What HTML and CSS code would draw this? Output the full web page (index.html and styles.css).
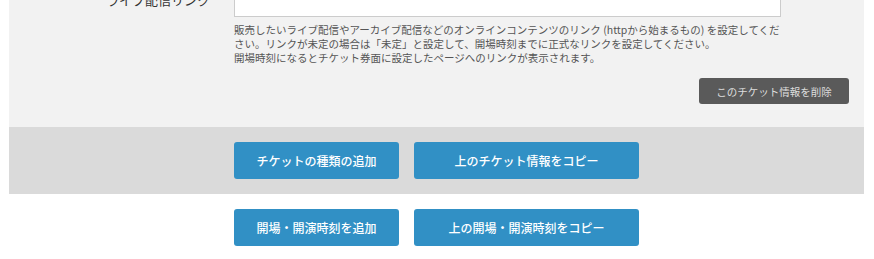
FILE: index.html
```html
<!DOCTYPE html>
<html lang="ja">
<head>
<meta charset="utf-8">
<title>チケット設定</title>
<link rel="stylesheet" href="styles.css">
</head>
<body>
<div class="page">
  <section class="panel">
    <div class="form-row">
      <label class="label" for="live-link">ライブ配信リンク</label>
      <div class="field">
        <input class="input" id="live-link" type="text">
        <p class="help">販売したいライブ配信やアーカイブ配信などのオンラインコンテンツのリンク (httpから始まるもの) を設定してください。リンクが未定の場合は「未定」と設定して、開場時刻までに正式なリンクを設定してください。<br>開場時刻になるとチケット券面に設定したページへのリンクが表示されます。</p>
      </div>
    </div>
    <div class="panel-actions">
      <button class="btn-delete" type="button">このチケット情報を削除</button>
    </div>
  </section>
  <div class="band band-gray">
    <button class="btn btn-narrow" type="button">チケットの種類の追加</button>
    <button class="btn btn-wide" type="button">上のチケット情報をコピー</button>
  </div>
  <div class="band">
    <button class="btn btn-narrow" type="button">開場・開演時刻を追加</button>
    <button class="btn btn-wide" type="button">上の開場・開演時刻をコピー</button>
  </div>
</div>
</body>
</html>
```

FILE: styles.css
```css
* {
  box-sizing: border-box;
}

html, body {
  margin: 0;
  padding: 0;
  background: #ffffff;
}

body {
  font-family: "Noto Sans CJK JP", "Noto Sans", sans-serif;
  color: #333333;
}

.page {
  width: 855px;
  margin: -16px 0 0 9px;
}

.panel {
  background: #f2f2f2;
  padding: 0 15px 23px 0;
}

.form-row {
  display: grid;
  grid-template-columns: 201px 547px;
  column-gap: 24px;
  align-items: start;
}

.label {
  height: 33px;
  line-height: 33px;
  text-align: right;
  font-size: 13px;
  color: #333333;
  margin-top: -1px;
}

.field {
  display: flex;
  flex-direction: column;
}

.input {
  display: block;
  width: 547px;
  height: 33px;
  border: 1px solid #cccccc;
  background: #ffffff;
  margin: 0;
  padding: 0 8px;
}

.help {
  margin: 6px 0 0;
  font-size: 10.5px;
  line-height: 14px;
  color: #555555;
}

.panel-actions {
  display: flex;
  justify-content: flex-end;
  margin-top: 13px;
}

.btn-delete {
  width: 150px;
  height: 26px;
  border: none;
  border-radius: 3px;
  background: #5a5a5a;
  color: #dddddd;
  font-family: inherit;
  font-size: 10.5px;
  padding: 0;
  cursor: pointer;
}

.band {
  display: flex;
  gap: 15px;
  padding: 15px 0 15px 225px;
}

.band-gray {
  background: #dadada;
}

.btn {
  height: 37px;
  border: none;
  border-radius: 3px;
  background: #3190c5;
  color: #ffffff;
  font-family: inherit;
  font-size: 12px;
  font-weight: 500;
  padding: 0;
  cursor: pointer;
}

.btn-narrow {
  width: 165px;
}

.btn-wide {
  width: 225px;
}
```
